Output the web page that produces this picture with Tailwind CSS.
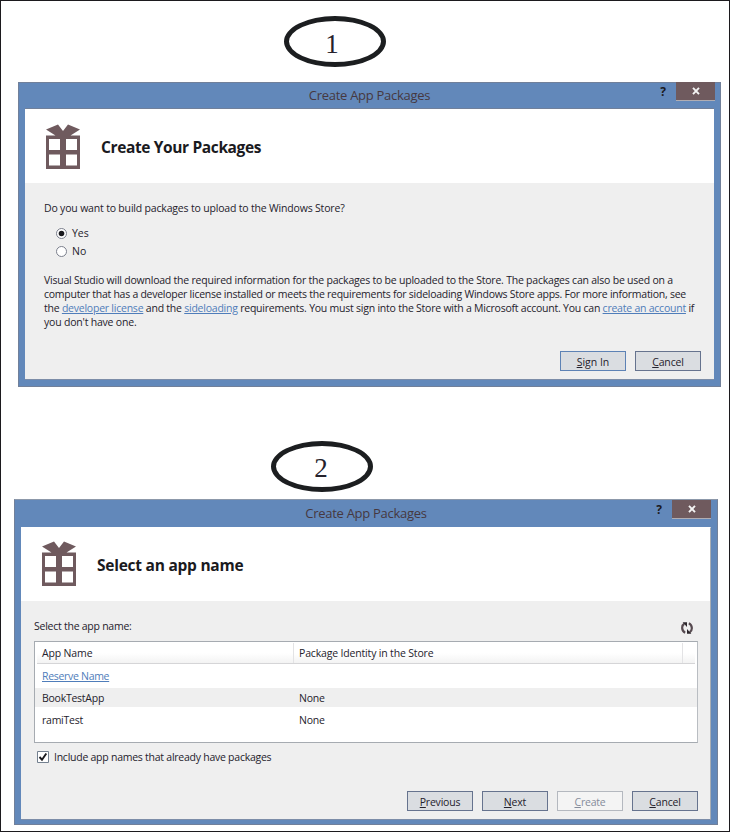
<!DOCTYPE html>
<html lang="en">
<head>
<meta charset="utf-8">
<title>Create App Packages</title>
<script src="https://cdn.jsdelivr.net/npm/@tailwindcss/browser@4"></script>
</head>
<body class="bg-white">
<svg class="hidden">
  <symbol id="gift" viewBox="0 0 34 46">
    <path fill="#6f5a5e" fill-rule="evenodd" d="M0 11.5H9.500L0 5.500 12 .5 17 7 22 .5 34 5.500 24.500 11.500H34V45H0ZM3 15V26H14V15ZM20 15V26H31V15ZM3 30.500V41.500H14V30.500ZM20 30.500V41.500H31V30.500Z"/>
  </symbol>
  <symbol id="close" viewBox="0 0 8 8">
    <path d="M1 .8 7 7.200M7 .8 1 7.200" stroke="#f4f4f4" stroke-width="1.900" fill="none"/>
  </symbol>
</svg>
<main class="w-[730px] h-[832px] border border-[#1c1a1e] flex flex-col font-['Open_Sans','Noto_Sans',sans-serif] text-[10.5px] leading-[14px] text-[#25222c] whitespace-nowrap overflow-hidden">
  <div class="ml-[283px] mt-[15px] w-[102px] h-[51px] shrink-0 rounded-[50%] border-5 border-[#1c1e20] flex justify-center pr-[6px] pt-[9px] font-['Liberation_Serif',serif] text-[27px] leading-[28px]">1</div>

  <section class="ml-[17px] mt-[15px] w-[703px] h-[305px] shrink-0 bg-[#6288ba] border border-[#71809a] px-[6px] pb-[6px] flex flex-col">
    <header class="h-[25px] shrink-0 flex relative">
      <h1 class="w-full text-center text-[13px] leading-[25px] tracking-[-0.28px] text-[#46383f]">Create App Packages</h1>
      <div class="absolute right-[-1px] top-[-1px] flex">
        <span class="w-[26px] text-[12px] font-bold leading-[19px] text-[#1c1a1e] text-center">?</span>
        <span class="w-[39px] h-[19px] bg-[#6f5a5e] border-b border-[#b0adb3] flex items-center justify-center"><svg class="w-2 h-2"><use href="#close"/></svg></span>
      </div>
    </header>
    <div class="flex-1 bg-[#efefef] border-y border-[#7c8da8] border-t-[#71809a] flex flex-col">
      <div class="h-[74px] shrink-0 bg-white flex pl-[21px]">
        <svg class="w-[34px] h-[46px] mt-[15px]"><use href="#gift"/></svg>
        <h2 class="ml-[21px] mt-[27px] text-[15.5px] leading-[22px] font-bold tracking-[-0.37px] text-[#1a1a1e]">Create Your Packages</h2>
      </div>
      <div class="flex-1 flex flex-col pl-[19px] pr-[13px] pt-[18px] pb-[8px]">
        <p class="tracking-[-0.18px]">Do you want to build packages to upload to the Windows Store?</p>
        <label class="mt-[11px] ml-[12px] flex items-center gap-[5px]"><svg class="size-[11px]" viewBox="0 0 11 11"><circle cx="5.5" cy="5.5" r="5" fill="#fff" stroke="#7b7f8c"/><circle cx="5.5" cy="5.500" r="2.800" fill="#19191d"/></svg>Yes</label>
        <label class="mt-[4px] ml-[12px] flex items-center gap-[5px]"><svg class="size-[11px]" viewBox="0 0 11 11"><circle cx="5.5" cy="5.500" r="5" fill="#fff" stroke="#7b7f8c"/></svg>No</label>
        <div class="mt-[15px] leading-[14px]">
          <p class="tracking-[-0.22px]">Visual Studio will download the required information for the packages to be uploaded to the Store. The packages can also be used on a</p>
          <p class="tracking-[-0.26px]">computer that has a developer license installed or meets the requirements for sideloading Windows Store apps. For more information, see</p>
          <p class="tracking-[-0.23px]">the <a class="underline text-[#4f7dba]">developer license</a> and the <a class="underline text-[#4f7dba]">sideloading</a> requirements. You must sign into the Store with a Microsoft account. You can <a class="underline text-[#4f7dba]">create an account</a> if</p>
          <p class="tracking-[-0.2px]">you don't have one.</p>
        </div>
        <div class="mt-auto flex justify-end gap-[9px]">
          <button class="w-[66px] h-[20px] bg-[#dadde1] border border-[#5d82b5] pt-px"><span class="underline">S</span>ign In</button>
          <button class="w-[66px] h-[20px] bg-[#dadde1] border border-[#66738e] pt-px tracking-[-0.15px]"><span class="underline">C</span>ancel</button>
        </div>
      </div>
    </div>
  </section>

  <div class="ml-[270px] mt-[54px] w-[102px] h-[51px] shrink-0 rounded-[50%] border-5 border-[#1c1e20] flex justify-center pr-[2px] pt-[8px] font-['Liberation_Serif',serif] text-[27px] leading-[28px]">2</div>

  <section class="ml-[13px] mt-[7px] w-[704px] h-[326px] shrink-0 bg-[#6288ba] border border-[#71809a] border-t-[#8c98aa] px-[6px] pb-[4px] flex flex-col">
    <header class="h-[27px] shrink-0 flex relative">
      <h1 class="w-full text-center text-[13px] leading-[27px] tracking-[-0.28px] text-[#46383f]">Create App Packages</h1>
      <div class="absolute right-0 top-0 flex">
        <span class="w-[26px] text-[12px] font-bold leading-[19px] text-[#1c1a1e] text-center">?</span>
        <span class="w-[39px] h-[19px] bg-[#6f5a5e] border-b border-[#b0adb3] flex items-center justify-center"><svg class="w-2 h-2"><use href="#close"/></svg></span>
      </div>
    </header>
    <div class="flex-1 bg-[#efefef] border-y border-r border-[#7c8da8] border-t-white border-r-[#a8adb4] flex flex-col">
      <div class="h-[73px] shrink-0 bg-white flex pl-[21px]">
        <svg class="w-[34px] h-[46px] mt-[13px]"><use href="#gift"/></svg>
        <h2 class="ml-[21px] mt-[26px] text-[15.5px] leading-[22px] font-bold tracking-[-0.25px] text-[#1a1a1e]">Select an app name</h2>
      </div>
      <div class="flex-1 flex flex-col pl-[13px] pr-[12px] pt-[18px] pb-[8px]">
        <div class="flex justify-between items-start pr-[5px]">
          <p class="tracking-[-0.25px]">Select the app name:</p>
          <svg class="w-[12px] h-[12px] mt-[3px]" viewBox="0 0 11 11" fill="none" stroke="#574a50" stroke-width="2"><path d="M3.800 9.800C.3 8 .3 3.200 3 1.600M7.200 1.200C10.700 3 10.700 7.800 8 9.400"/><path fill="#2e282e" stroke="none" d="M1.500 .3H5.500V4.500ZM9.500 10.700H5.500V6.500Z"/></svg>
        </div>
        <div class="mt-[7px] h-[102px] bg-white border border-[#a6abb1] border-r-[#b9bdc2] px-[2px] flex flex-col">
          <div class="mt-px h-[21px] shrink-0 border-b border-[#d5d5d7] bg-linear-to-b from-white via-white to-[#f3f3f3] flex items-center">
            <span class="w-[257px] h-full border-r border-[#e3e3e5] pl-[5px] leading-[21px] tracking-[-0.15px]">App Name</span>
            <span class="w-[389px] h-full border-r border-[#e3e3e5] pl-[5px] leading-[21px] tracking-[-0.17px]">Package Identity in the Store</span>
          </div>
          <div class="h-[24px] shrink-0 pl-[5px] pt-[5px] tracking-[-0.3px]"><a class="underline text-[#4f7dba]">Reserve Name</a></div>
          <div class="h-[19px] shrink-0 -mx-[2px] pl-[7px] bg-[#efefef] flex items-center tracking-[-0.25px]"><span class="w-[257px]">BookTestApp</span><span>None</span></div>
          <div class="h-[26px] shrink-0 pl-[5px] flex items-center tracking-[-0.25px]"><span class="w-[257px]">ramiTest</span><span>None</span></div>
        </div>
        <label class="mt-[7px] ml-[3px] flex items-center gap-[5px] tracking-[-0.25px]"><svg class="size-[12px]" viewBox="0 0 12 12"><path fill="#fff" stroke="#73808f" d="M.5.5h11v11H.5z"/><path d="M2.500 6 5 8.700 9.300 2.500" fill="none" stroke="#19191d" stroke-width="1.900"/></svg>Include app names that already have packages</label>
        <div class="mt-auto flex justify-end gap-[9px] tracking-[-0.2px]">
          <button class="w-[66px] h-[20px] bg-[#dadde1] border border-[#66738e] pt-px"><span class="underline">P</span>revious</button>
          <button class="w-[66px] h-[20px] bg-[#dadde1] border border-[#66738e] pt-px"><span class="underline">N</span>ext</button>
          <button class="w-[66px] h-[20px] bg-[#f4f4f4] border border-[#b4b8bf] text-[#858c9b] pt-px"><span class="underline">C</span>reate</button>
          <button class="w-[66px] h-[20px] bg-[#dadde1] border border-[#66738e] pt-px"><span class="underline">C</span>ancel</button>
        </div>
      </div>
    </div>
  </section>
</main>
</body>
</html>
